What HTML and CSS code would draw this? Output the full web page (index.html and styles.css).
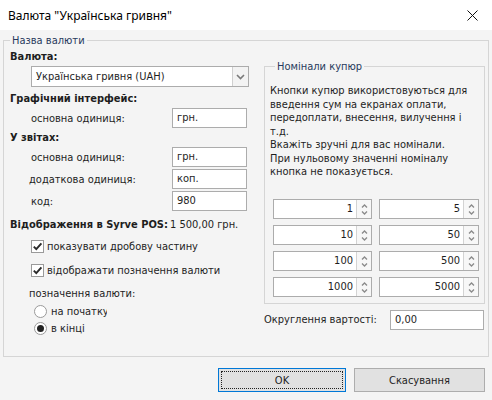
FILE: index.html
```html
<!DOCTYPE html>
<html>
<head>
<meta charset="utf-8">
<link rel="stylesheet" href="styles.css">
</head>
<body>
<div class="win">
  <div class="titlebar">
    <span class="title">Валюта "Українська гривня"</span>
    <svg class="close" width="11" height="11" viewBox="0 0 11 11"><path d="M0.5 0.5 L10.5 10.5 M10.5 0.5 L0.5 10.5" stroke="#111" stroke-width="1" fill="none"/></svg>
  </div>
  <div class="content">
    <fieldset class="group main">
      <legend>Назва валюти</legend>
      <div class="cols">
        <div class="left">
          <div class="hdr m3">Валюта:</div>
          <div class="select m2">
            <span class="sel-text">Українська гривня (UAH)</span>
            <span class="sel-btn"><svg width="9" height="6" viewBox="0 0 9 6"><path d="M1 1 L4.5 4.5 L8 1" stroke="#7a7a7a" stroke-width="1.6" fill="none"/></svg></span>
          </div>
          <div class="hdr m5">Графічний інтерфейс:</div>
          <div class="row m2"><span class="lbl">основна одиниця:</span><span class="inp">грн.</span></div>
          <div class="hdr m3">У звітах:</div>
          <div class="row m2"><span class="lbl">основна одиниця:</span><span class="inp">грн.</span></div>
          <div class="row m2"><span class="lbl lbl-n">додаткова одиниця:</span><span class="inp">коп.</span></div>
          <div class="row m2"><span class="lbl">код:</span><span class="inp">980</span></div>
          <div class="hdr m7 disp">Відображення в Syrve POS:<span class="disp-val">1 500,00 грн.</span></div>
          <div class="check m7 clip1">
            <span class="box"><svg width="11" height="11" viewBox="0 0 11 11"><path d="M1.8 5.6 L4.3 8.2 L9.4 2.4" stroke="#2b2b2b" stroke-width="1.9" fill="none"/></svg></span>
            <span class="ctext">показувати дробову частину</span>
          </div>
          <div class="check m10">
            <span class="box"><svg width="11" height="11" viewBox="0 0 11 11"><path d="M1.8 5.6 L4.3 8.2 L9.4 2.4" stroke="#2b2b2b" stroke-width="1.9" fill="none"/></svg></span>
            <span class="ctext">відображати позначення валюти</span>
          </div>
          <div class="plain m10">позначення валюти:</div>
          <div class="radio m3 clip2"><span class="rb"></span><span class="rtext">на початку</span></div>
          <div class="radio m3"><span class="rb on"><span class="dot"></span></span><span class="rtext">в кінці</span></div>
        </div>
        <div class="right">
          <fieldset class="group notes">
            <legend>Номінали купюр</legend>
            <div class="desc">Кнопки купюр використовуються для<br>введення сум на екранах оплати,<br>передоплати, внесення, вилучення і<br>т.д.<br>Вкажіть зручні для вас номінали.<br>При нульовому значенні номіналу<br>кнопка не показується.</div>
            <div class="spins">
              <div class="spin"><span class="sv">1</span><span class="sb"><svg width="7" height="13" viewBox="0 0 7 13"><path d="M1 4.5 L3.5 2 L6 4.5 M1 8.5 L3.5 11 L6 8.5" stroke="#8a8a8a" stroke-width="1.3" fill="none"/></svg></span></div>
              <div class="spin"><span class="sv">5</span><span class="sb"><svg width="7" height="13" viewBox="0 0 7 13"><path d="M1 4.5 L3.5 2 L6 4.5 M1 8.5 L3.5 11 L6 8.5" stroke="#8a8a8a" stroke-width="1.3" fill="none"/></svg></span></div>
              <div class="spin"><span class="sv">10</span><span class="sb"><svg width="7" height="13" viewBox="0 0 7 13"><path d="M1 4.5 L3.5 2 L6 4.5 M1 8.5 L3.5 11 L6 8.5" stroke="#8a8a8a" stroke-width="1.3" fill="none"/></svg></span></div>
              <div class="spin"><span class="sv">50</span><span class="sb"><svg width="7" height="13" viewBox="0 0 7 13"><path d="M1 4.5 L3.5 2 L6 4.5 M1 8.5 L3.5 11 L6 8.5" stroke="#8a8a8a" stroke-width="1.3" fill="none"/></svg></span></div>
              <div class="spin"><span class="sv">100</span><span class="sb"><svg width="7" height="13" viewBox="0 0 7 13"><path d="M1 4.5 L3.5 2 L6 4.5 M1 8.5 L3.5 11 L6 8.5" stroke="#8a8a8a" stroke-width="1.3" fill="none"/></svg></span></div>
              <div class="spin"><span class="sv">500</span><span class="sb"><svg width="7" height="13" viewBox="0 0 7 13"><path d="M1 4.5 L3.5 2 L6 4.5 M1 8.5 L3.5 11 L6 8.5" stroke="#8a8a8a" stroke-width="1.3" fill="none"/></svg></span></div>
              <div class="spin"><span class="sv">1000</span><span class="sb"><svg width="7" height="13" viewBox="0 0 7 13"><path d="M1 4.5 L3.5 2 L6 4.5 M1 8.5 L3.5 11 L6 8.5" stroke="#8a8a8a" stroke-width="1.3" fill="none"/></svg></span></div>
              <div class="spin"><span class="sv">5000</span><span class="sb"><svg width="7" height="13" viewBox="0 0 7 13"><path d="M1 4.5 L3.5 2 L6 4.5 M1 8.5 L3.5 11 L6 8.5" stroke="#8a8a8a" stroke-width="1.3" fill="none"/></svg></span></div>
            </div>
          </fieldset>
          <div class="round"><span class="plain">Округлення вартості:</span><span class="inp rinp">0,00</span></div>
        </div>
      </div>
    </fieldset>
    <div class="buttons">
      <div class="btn ok"><span class="focus">OK</span></div>
      <div class="btn cancel">Скасування</div>
    </div>
  </div>
</div>
</body>
</html>
```
FILE: styles.css
```css
* { box-sizing: border-box; }
html, body { margin: 0; padding: 0; }
body {
  width: 492px;
  height: 400px;
  overflow: hidden;
  background: #f4f4f4;
  font-family: "DejaVu Sans Condensed", "DejaVu Sans", sans-serif;
  font-size: 11px;
  color: #1e1e1e;
}
.win { width: 492px; height: 400px; display: flex; flex-direction: column; }
.titlebar {
  height: 30px;
  flex: none;
  background: #ffffff;
  display: flex;
  align-items: center;
  justify-content: space-between;
  padding-left: 8px;
  padding-right: 14px;
}
.title { font-family: "Noto Sans", "Open Sans", sans-serif; font-size: 12px; color: #000; }
.close { display: block; }
.content { flex: 1; padding: 4px 3px 0 3px; }
fieldset.group {
  margin: 0;
  padding: 0;
  border: 1px solid #d5d5d5;
  min-width: 0;
}
fieldset.group legend {
  padding: 0 2px;
  margin-left: 6px;
  line-height: 13px;
  color: #283a5c;
}
.cols { display: flex; height: 309px; }
.left { width: 261px; padding-left: 6px; display: flex; flex-direction: column; }
.right { width: 224px; padding-right: 3px; }
.hdr { font-weight: bold; line-height: 14px; height: 14px; white-space: nowrap; }
.m2 { margin-top: 2px; }
.m3 { margin-top: 3px; }
.m5 { margin-top: 5px; }
.m7 { margin-top: 7px; }
.m10 { margin-top: 10px; }
.select {
  margin-left: 21px;
  width: 218px;
  height: 21px;
  background: #fff;
  border: 1px solid #acacac;
  display: flex;
  align-items: center;
}
.sel-text { flex: 1; padding-left: 4px; white-space: nowrap; }
.sel-btn {
  width: 16px;
  height: 19px;
  border-left: 1px solid #d0d0d0;
  background: #f3f3f3;
  display: flex;
  align-items: center;
  justify-content: center;
}
.row { display: flex; align-items: center; height: 20px; padding-left: 21px; }
.lbl { width: 141px; white-space: nowrap; }
.lbl-n { margin-left: -2px; width: 143px; }
.inp {
  width: 75px;
  height: 20px;
  background: #fff;
  border: 1px solid #acacac;
  padding-left: 4px;
  line-height: 18px;
}
.disp-val { font-weight: normal; margin-left: 2px; }
.check { display: flex; align-items: center; height: 14px; padding-left: 21px; white-space: nowrap; }
.box {
  width: 13px;
  height: 13px;
  flex: none;
  border: 1px solid #9a9a9a;
  background: #fff;
  display: flex;
  align-items: center;
  justify-content: center;
}
.box svg { display: block; }
.ctext { margin-left: 3px; }
.clip1 { width: 213px; overflow: hidden; }
.plain { line-height: 14px; height: 14px; padding-left: 0; white-space: nowrap; }
.left > .plain { padding-left: 19px; }
.radio { display: flex; align-items: center; height: 14px; padding-left: 24px; white-space: nowrap; }
.clip2 { width: 97px; overflow: hidden; }
.rb {
  width: 13px;
  height: 13px;
  flex: none;
  border: 1px solid #9a9a9a;
  border-radius: 50%;
  background: #fff;
  display: flex;
  align-items: center;
  justify-content: center;
}
.dot { width: 7px; height: 7px; border-radius: 50%; background: #222; }
.rtext { margin-left: 4px; }
fieldset.notes { margin-top: 13px; width: 221px; }
fieldset.notes legend { margin-left: 10px; }
.desc {
  padding: 11px 0 0 5px;
  line-height: 13.5px;
  height: 106px;
  white-space: nowrap;
}
.spins {
  margin-top: 20px;
  padding: 0 0 6px 8px;
  display: grid;
  grid-template-columns: 99px 100px;
  column-gap: 7px;
  row-gap: 6px;
}
.spin {
  height: 20px;
  background: #fff;
  border: 1px solid #acacac;
  display: flex;
  align-items: stretch;
}
.sv { flex: 1; text-align: right; padding-right: 3px; line-height: 18px; }
.sb {
  width: 15px;
  border-left: 1px solid #d3d3d3;
  background: #f7f7f7;
  display: flex;
  align-items: center;
  justify-content: center;
}
.round { display: flex; align-items: center; margin-top: 6px; height: 20px; }
.rinp { margin-left: auto; width: 94px; margin-right: 1px; }
.buttons {
  display: flex;
  justify-content: flex-end;
  gap: 8px;
  padding-right: 4px;
  margin-top: 11px;
}
.btn {
  height: 24px;
  background: #e1e1e1;
  border: 1px solid #adadad;
  display: flex;
  align-items: center;
  justify-content: center;
}
.ok { width: 128px; border-color: #0078d7; padding: 2px; }
.focus {
  width: 100%;
  height: 100%;
  border: 1px dotted #222;
  display: flex;
  align-items: center;
  justify-content: center;
}
.cancel { width: 131px; }
```
